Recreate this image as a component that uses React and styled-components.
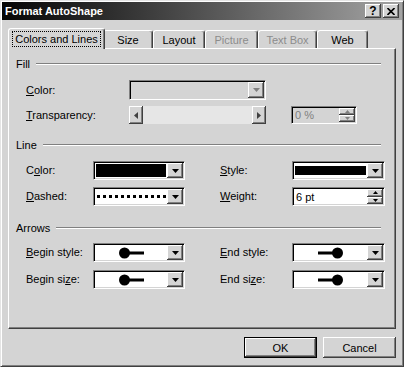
import React from "react";
import styled, { createGlobalStyle, css } from "styled-components";

const Global = createGlobalStyle`
  html, body { margin: 0; padding: 0; background: #d4d4d4; }
  body { font-family: "Liberation Sans", Arial, sans-serif; font-size: 11px; color: #000; }
`;

const FACE = "#d4d4d4";

const raised = css`
  background: ${FACE};
  box-shadow: inset -1px -1px 0 #404040, inset 1px 1px 0 #fff, inset -2px -2px 0 #808080;
`;

const Window = styled.div`
  box-sizing: border-box;
  width: 404px;
  height: 367px;
  background: ${FACE};
  border: 1px solid;
  border-color: #e4e4e4 #404040 #404040 #e4e4e4;
  box-shadow: inset 1px 1px 0 #fff, inset -1px -1px 0 #808080;
  padding: 1px;
  display: flex;
  flex-direction: column;
`;

const TitleBar = styled.div`
  height: 18px;
  display: flex;
  align-items: center;
  justify-content: space-between;
  padding: 0 3px 0 3px;
  background: linear-gradient(to right, #050505 0%, #3a3a3a 35%, #a4a4a4 100%);
`;

const Title = styled.span`
  color: #fff;
  font-weight: bold;
  font-size: 11px;
`;

const TitleButtons = styled.div`
  display: flex;
  gap: 2px;
`;

const TitleBtn = styled.div`
  ${raised};
  width: 16px;
  height: 14px;
  box-sizing: border-box;
  display: flex;
  align-items: center;
  justify-content: center;
  font-weight: bold;
  font-size: 12px;
  line-height: 14px;
  color: #000;
`;

const Body = styled.div`
  flex: 1;
  display: flex;
  flex-direction: column;
  padding: 8px 6px 0 6px;
`;

const TabStrip = styled.div`
  height: 20px;
  display: flex;
  align-items: flex-end;
  padding-left: 2px;
`;

const Tab = styled.div`
  box-sizing: border-box;
  width: ${(p) => (p.$active ? p.$w + 4 : p.$w)}px;
  height: ${(p) => (p.$active ? 21 : 18)}px;
  margin: ${(p) => (p.$active ? "0 -2px -1px -2px" : "0")};
  position: relative;
  z-index: ${(p) => (p.$active ? 2 : 1)};
  background: ${FACE};
  border-top: 1px solid #fff;
  border-left: 1px solid #fff;
  border-right: 1px solid #404040;
  box-shadow: inset -1px 0 0 #808080;
  border-radius: 3px 3px 0 0;
  display: flex;
  align-items: center;
  justify-content: center;
  padding-bottom: ${(p) => (p.$active ? 1 : 0)}px;
  color: ${(p) => (p.$disabled ? "#8c8c8c" : "#000")};
  font-size: 11px;
  white-space: nowrap;
`;

const FocusText = styled.span`
  outline: 1px dotted #000;
  padding: 1px 2px;
  line-height: 12px;
`;

const Panel = styled.div`
  box-sizing: border-box;
  height: 281px;
  border: 1px solid;
  border-color: #fff #404040 #404040 #fff;
  box-shadow: inset -1px -1px 0 #808080;
  padding: 8px 8px 0 7px;
  display: flex;
  flex-direction: column;
`;

const SectionHeader = styled.div`
  height: 14px;
  display: flex;
  align-items: center;
  gap: 6px;
  padding-right: 6px;
  margin-top: ${(p) => p.$mt || 0}px;
  line-height: 14px;
  &::after {
    content: "";
    flex: 1;
    height: 0;
    border-top: 1px solid #808080;
    border-bottom: 1px solid #fff;
  }
`;

const Grid = styled.div`
  display: grid;
  margin-left: 10px;
  margin-top: ${(p) => p.$mt}px;
  grid-template-columns: ${(p) => p.$cols};
  grid-template-rows: ${(p) => p.$rows};
  row-gap: ${(p) => p.$gap}px;
`;

const Label = styled.span`
  grid-column: ${(p) => p.$col};
  align-self: center;
  white-space: nowrap;
  line-height: 13px;
`;

const Field = styled.div`
  grid-column: ${(p) => p.$col};
  box-sizing: border-box;
  height: 100%;
  display: flex;
  background: ${(p) => (p.$disabled ? FACE : "#fff")};
  border: 1px solid;
  border-color: #808080 #fff #fff #808080;
  box-shadow: inset 1px 1px 0 #000, inset -1px -1px 0 ${FACE};
  padding: 1px;
`;

const FieldContent = styled.div`
  flex: 1;
  min-width: 0;
  margin: 1px;
  display: flex;
  align-items: center;
  justify-content: ${(p) => p.$justify || "flex-start"};
  color: ${(p) => (p.$disabled ? "#808080" : "#000")};
  padding-left: ${(p) => p.$pl || 0}px;
`;

const DropButton = styled.div`
  ${raised};
  width: 16px;
  flex: none;
  display: flex;
  align-items: center;
  justify-content: center;
`;

const SpinButtons = styled.div`
  width: 16px;
  flex: none;
  display: flex;
  flex-direction: column;
`;

const SpinHalf = styled.div`
  ${raised};
  flex: 1;
  display: flex;
  align-items: center;
  justify-content: center;
`;

const Swatch = styled.div`
  width: 100%;
  height: ${(p) => p.$h}px;
  background: #000;
`;

const Dots = styled.div`
  width: 100%;
  height: 3px;
  margin-left: 1px;
  background: repeating-linear-gradient(to right, #000 0 3px, transparent 3px 6px);
`;

const Slider = styled.div`
  grid-column: ${(p) => p.$col};
  display: flex;
  height: 100%;
`;

const SliderButton = styled.div`
  ${raised};
  width: 14px;
  display: flex;
  align-items: center;
  justify-content: center;
`;

const Track = styled.div`
  flex: 1;
  background: #e6e6e6;
`;

const Footer = styled.div`
  display: flex;
  justify-content: flex-end;
  gap: 6px;
  margin-top: 8px;
`;

const DialogButton = styled.div`
  ${raised};
  box-sizing: border-box;
  width: 73px;
  height: 21px;
  display: flex;
  align-items: center;
  justify-content: center;
  ${(p) =>
    p.$default &&
    css`
      border: 1px solid #000;
    `}
`;

const Arrow = ({ dir, color = "#000", size = "big" }) => {
  const big = size === "big";
  if (dir === "down" || dir === "up") {
    const w = big ? 7 : 5;
    const h = big ? 4 : 3;
    const pts = dir === "down" ? `0,0 ${w},0 ${w / 2},${h}` : `0,${h} ${w},${h} ${w / 2},0`;
    return (
      <svg width={w} height={h} viewBox={`0 0 ${w} ${h}`}>
        <polygon points={pts} fill={color} />
      </svg>
    );
  }
  const pts = dir === "left" ? "4,0 4,7 0,3.5" : "0,0 0,7 4,3.5";
  return (
    <svg width={4} height={7} viewBox="0 0 4 7">
      <polygon points={pts} fill={color} />
    </svg>
  );
};

const BallArrow = ({ end }) => (
  <svg width="26" height="12" viewBox="0 0 26 12">
    {end ? (
      <>
        <rect x="0" y="4.5" width="15" height="3" fill="#000" />
        <circle cx="19.5" cy="6" r="5.5" fill="#000" />
      </>
    ) : (
      <>
        <circle cx="6.5" cy="6" r="5.5" fill="#000" />
        <rect x="11" y="4.5" width="15" height="3" fill="#000" />
      </>
    )}
  </svg>
);

const Combo = ({ col, children, disabled, justify }) => (
  <Field $col={col} $disabled={disabled}>
    <FieldContent $justify={justify}>{children}</FieldContent>
    <DropButton>
      <Arrow dir="down" color={disabled ? "#808080" : "#000"} />
    </DropButton>
  </Field>
);

const Spin = ({ col, value, disabled }) => (
  <Field $col={col} $disabled={disabled}>
    <FieldContent $disabled={disabled} $pl={1}>{value}</FieldContent>
    <SpinButtons>
      <SpinHalf>
        <Arrow dir="up" size="small" color={disabled ? "#808080" : "#000"} />
      </SpinHalf>
      <SpinHalf>
        <Arrow dir="down" size="small" color={disabled ? "#808080" : "#000"} />
      </SpinHalf>
    </SpinButtons>
  </Field>
);

const tabs = [
  { name: "Colors and Lines", w: 93, active: true },
  { name: "Size", w: 50 },
  { name: "Layout", w: 52 },
  { name: "Picture", w: 53, disabled: true },
  { name: "Text Box", w: 59, disabled: true },
  { name: "Web", w: 51 },
];

const COLS = "67px 92px 35px 72px 93px";

export default function App() {
  return (
    <>
      <Global />
      <Window>
        <TitleBar>
          <Title>Format AutoShape</Title>
          <TitleButtons>
            <TitleBtn>?</TitleBtn>
            <TitleBtn>
              <svg width="8" height="7" viewBox="0 0 8 7">
                <path d="M0.5 0 L7.5 7 M7.5 0 L0.5 7" stroke="#000" strokeWidth="1.6" />
              </svg>
            </TitleBtn>
          </TitleButtons>
        </TitleBar>
        <Body>
          <TabStrip>
            {tabs.map((t) => (
              <Tab key={t.name} $w={t.w} $active={t.active} $disabled={t.disabled}>
                {t.active ? <FocusText>{t.name}</FocusText> : t.name}
              </Tab>
            ))}
          </TabStrip>
          <Panel>
            <SectionHeader>Fill</SectionHeader>
            <Grid $mt={9} $cols="103px 137px 25px 66px" $rows="20px 18px" $gap={6}>
              <Label $col={1}>
                <u>C</u>olor:
              </Label>
              <Combo col={2} disabled />
              <Label $col={1}>
                <u>T</u>ransparency:
              </Label>
              <Slider $col={2}>
                <SliderButton>
                  <Arrow dir="left" color="#404040" />
                </SliderButton>
                <Track />
                <SliderButton>
                  <Arrow dir="right" color="#404040" />
                </SliderButton>
              </Slider>
              <Spin col={4} value="0 %" disabled />
            </Grid>

            <SectionHeader $mt={14}>Line</SectionHeader>
            <Grid $mt={9} $cols={COLS} $rows="19px 19px" $gap={7}>
              <Label $col={1}>
                C<u>o</u>lor:
              </Label>
              <Combo col={2}>
                <Swatch $h={13} />
              </Combo>
              <Label $col={4}>
                <u>S</u>tyle:
              </Label>
              <Combo col={5}>
                <Swatch $h={9} />
              </Combo>
              <Label $col={1}>
                <u>D</u>ashed:
              </Label>
              <Combo col={2}>
                <Dots />
              </Combo>
              <Label $col={4}>
                <u>W</u>eight:
              </Label>
              <Spin col={5} value="6 pt" />
            </Grid>

            <SectionHeader $mt={15}>Arrows</SectionHeader>
            <Grid $mt={8} $cols={COLS} $rows="19px 19px" $gap={8}>
              <Label $col={1}>
                <u>B</u>egin style:
              </Label>
              <Combo col={2} justify="center">
                <BallArrow />
              </Combo>
              <Label $col={4}>
                <u>E</u>nd style:
              </Label>
              <Combo col={5} justify="center">
                <BallArrow end />
              </Combo>
              <Label $col={1}>
                Begin si<u>z</u>e:
              </Label>
              <Combo col={2} justify="center">
                <BallArrow />
              </Combo>
              <Label $col={4}>
                End si<u>z</u>e:
              </Label>
              <Combo col={5} justify="center">
                <BallArrow end />
              </Combo>
            </Grid>
          </Panel>
          <Footer>
            <DialogButton $default>OK</DialogButton>
            <DialogButton>Cancel</DialogButton>
          </Footer>
        </Body>
      </Window>
    </>
  );
}
